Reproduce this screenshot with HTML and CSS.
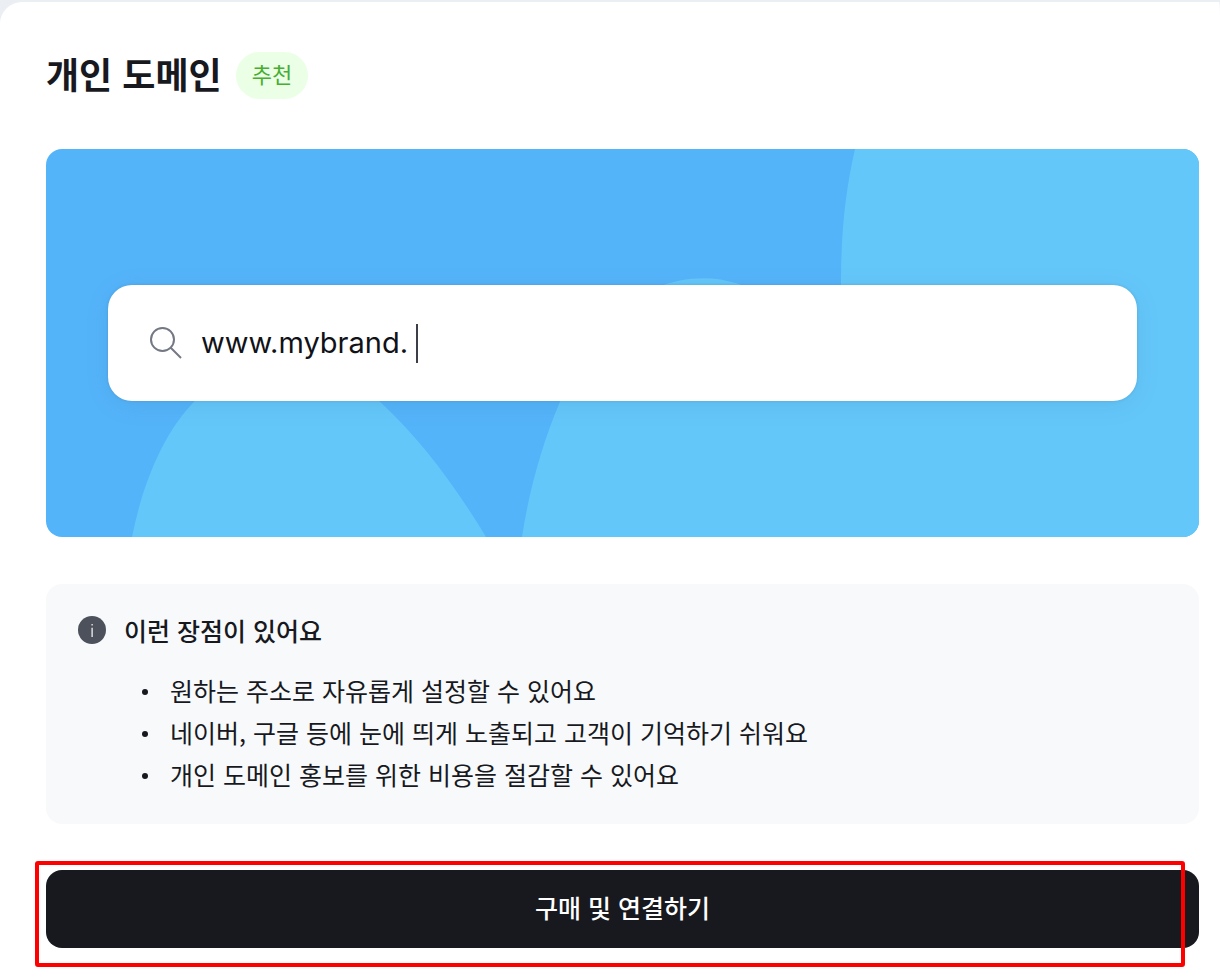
FILE: index.html
```html
<!DOCTYPE html>
<html lang="ko">
<head>
    <meta charset="UTF-8">
    <meta name="viewport" content="width=device-width, initial-scale=1.0">
    <title>개인 도메인</title>
    <link rel="stylesheet" href="styles.css">
</head>
<body>
    <main class="card">
        <header class="card-header">
            <h1 class="title">개인 도메인</h1>
            <span class="badge">추천</span>
        </header>

        <div class="banner">
            <svg class="banner-bg" viewBox="0 0 1153 387" preserveAspectRatio="none" aria-hidden="true">
                <path d="M809 0C799 44 795 84 795 136L794 260H1153V0Z"></path>
                <path d="M86 387C97 333 117 284 148 252C190 210 280 200 334 252C374 289 408 334 440 387Z"></path>
                <path d="M476 387C483 341 496 294 514 252C545 180 590 129 658 129C730 129 770 200 794 220H1153V387Z"></path>
            </svg>
            <div class="search-bar">
                <svg class="search-icon" viewBox="0 0 34 34" aria-hidden="true">
                    <circle cx="13.5" cy="13.5" r="11.5"></circle>
                    <path d="M21.5 21.5L32 32"></path>
                </svg>
                <input type="text" class="search-input" value="www.mybrand." size="11" aria-label="도메인 주소">
                <span class="caret"></span>
            </div>
        </div>

        <section class="benefits">
            <svg class="info-icon" viewBox="0 0 28 28" aria-hidden="true">
                <circle cx="14" cy="14" r="14"></circle>
                <path d="M13.5 8h1.2v1.6h-1.2zM13.5 11.8h1.2V21h-1.2z"></path>
            </svg>
            <div class="benefits-body">
                <h2 class="benefits-title">이런 장점이 있어요</h2>
                <ul class="benefits-list">
                    <li>원하는 주소로 자유롭게 설정할 수 있어요</li>
                    <li>네이버, 구글 등에 눈에 띄게 노출되고 고객이 기억하기 쉬워요</li>
                    <li>개인 도메인 홍보를 위한 비용을 절감할 수 있어요</li>
                </ul>
            </div>
        </section>

        <div class="action">
            <button type="button" class="connect-btn">구매 및 연결하기</button>
            <span class="highlight"></span>
        </div>
    </main>
</body>
</html>
```

FILE: styles.css
```css
* {
    box-sizing: border-box;
}
body {
    margin: 0;
    padding-top: 2px;
    min-height: 100vh;
    display: flex;
    background-color: #ebeff4;
    color: #17191e;
    font-family: "Noto Sans CJK KR", "Noto Sans", sans-serif;
}
.card {
    flex: 1;
    min-width: 0;
    padding: 50px 21px 20px 46px;
    background-color: #fff;
    border-radius: 22px 1px 0 0 / 22px 16px 0 0;
}
.card-header {
    display: flex;
    align-items: center;
    gap: 14px;
    margin-bottom: 50px;
}
.title {
    margin: 0;
    padding-bottom: 4px;
    font-size: 36px;
    line-height: 43px;
    font-weight: 700;
}
.badge {
    padding: 0 16px 4px;
    border-radius: 24px;
    background-color: #eaffe5;
    color: #47ae31;
    font-size: 22px;
    line-height: 43px;
}
/* Blue banner with the domain field */
.banner {
    position: relative;
    padding: 136px 62px;
    border-radius: 16px;
    background-color: #54b4fa;
    overflow: hidden;
}
.banner-bg {
    position: absolute;
    inset: 0;
    width: 100%;
    height: 100%;
    fill: #64c7fa;
}
.search-bar {
    position: relative;
    display: flex;
    align-items: center;
    height: 116px;
    padding: 0 41px;
    border-radius: 24px;
    background-color: #fff;
    box-shadow: 0 4px 24px rgba(60, 80, 110, 0.1), 0 0 3px rgba(60, 80, 110, 0.2);
}
.search-icon {
    width: 34px;
    height: 34px;
    margin-right: 18px;
    fill: none;
    stroke: #747883;
    stroke-width: 2;
}
.search-input {
    field-sizing: content;
    padding: 0;
    border: none;
    outline: none;
    background: none;
    color: #111217;
    font-family: Inter, "Noto Sans CJK KR", sans-serif;
    font-size: 29px;
    line-height: 40px;
}
.caret {
    width: 2px;
    height: 39px;
    margin-left: 8px;
    background-color: #3c3e48;
}
/* Benefits */
.benefits {
    display: flex;
    gap: 18px;
    margin: 47px 0 46px;
    padding: 27px 32px 29px;
    border-radius: 16px;
    background-color: #f8f9fb;
}
.info-icon {
    flex: none;
    width: 28px;
    height: 28px;
    margin-top: 5px;
    fill: #4d515b;
}
.info-icon path {
    fill: #fff;
}
.benefits-title {
    margin: 0 0 20px;
    font-size: 25px;
    line-height: 38px;
    font-weight: 500;
}
.benefits-list {
    margin: 0;
    padding: 0 0 0 18px;
    list-style: none;
    font-size: 25px;
    line-height: 42px;
}
.benefits-list li {
    display: flex;
    align-items: center;
    gap: 22px;
}
.benefits-list li::before {
    content: "";
    flex: none;
    width: 6px;
    height: 6px;
    margin-top: 4px;
    border-radius: 50%;
    background-color: #17191e;
}
/* Button */
.action {
    position: relative;
}
.connect-btn {
    display: block;
    width: 100%;
    height: 78px;
    padding: 0 0 4px;
    border: none;
    border-radius: 16px;
    background-color: #17191e;
    color: #fff;
    font-family: inherit;
    font-size: 25px;
    font-weight: 500;
    cursor: pointer;
}
.highlight {
    position: absolute;
    inset: -9px 14px -19px -11px;
    border: 4px solid #ff0000;
    border-radius: 3px;
    pointer-events: none;
}
```
